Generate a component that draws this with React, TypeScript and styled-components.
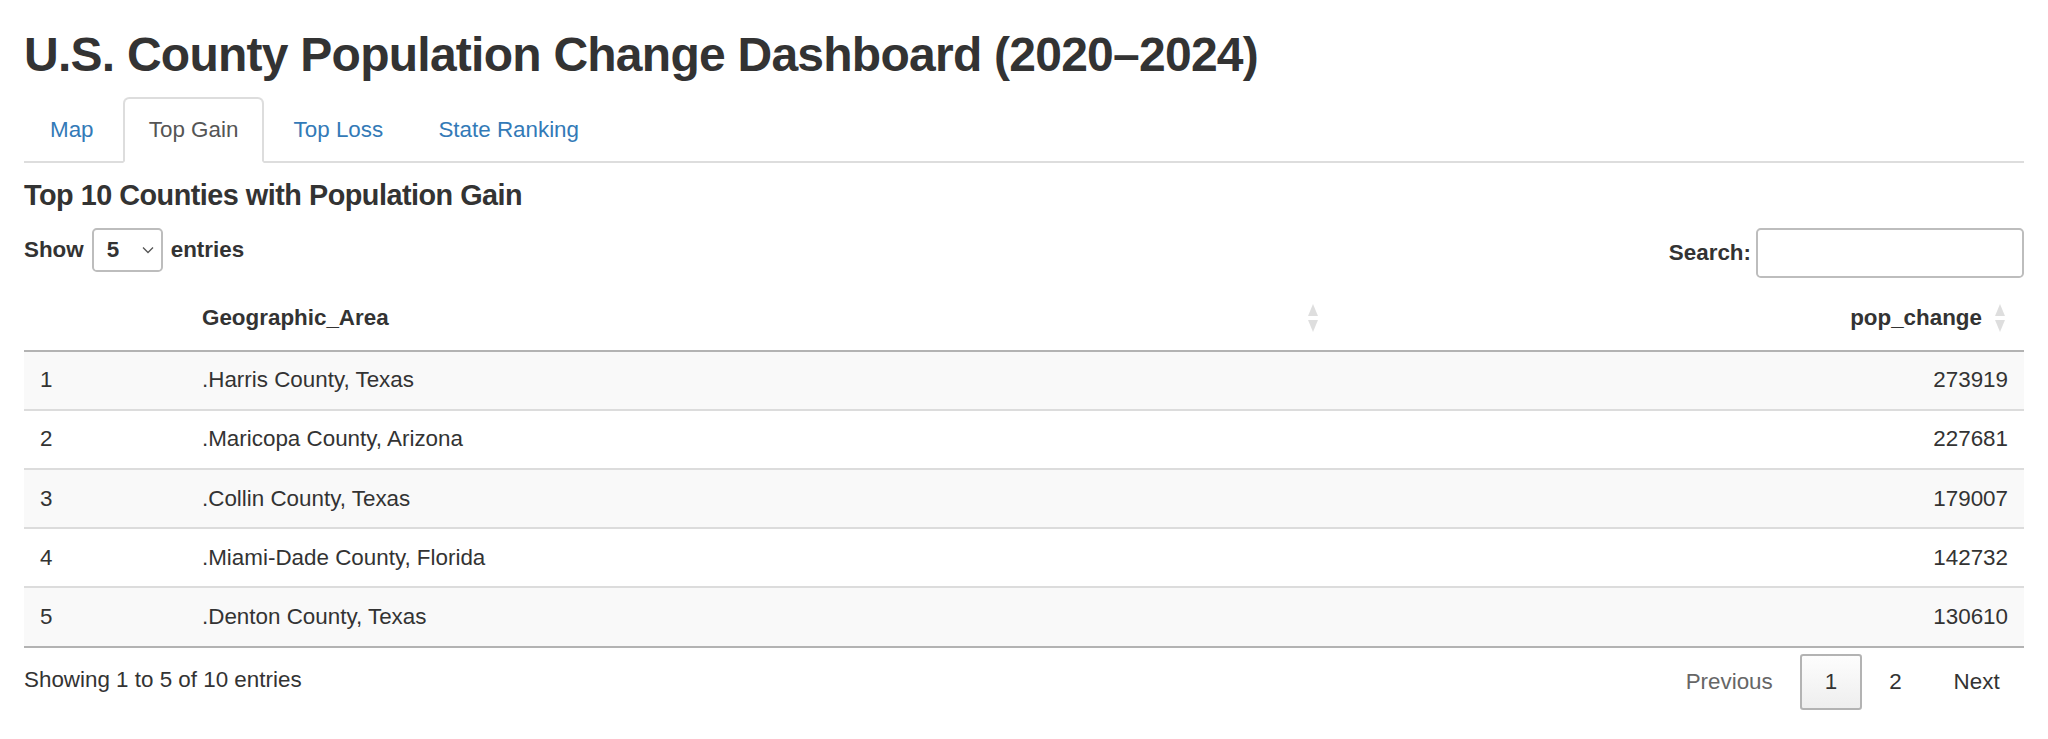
import * as React from "react";
import styled, { createGlobalStyle } from "styled-components";

const GlobalStyle = createGlobalStyle`
  html, body {
    margin: 0;
    padding: 0;
    background: #fff;
  }
  body {
    font-family: "Liberation Sans", Arial, Helvetica, sans-serif;
    font-size: 22.4px;
    line-height: 32px;
    color: #333;
  }
  * {
    box-sizing: border-box;
  }
`;

const Page = styled.div`
  padding: 0 24px;
`;

const Title = styled.h2`
  margin: 29px 0 15px;
  font-size: 48px;
  line-height: 52.8px;
  font-weight: 700;
  letter-spacing: -0.75px;
`;

const Tabs = styled.ul`
  display: flex;
  margin: 0;
  padding: 0;
  list-style: none;
  border-bottom: 2px solid #ddd;
`;

const TabItem = styled.li`
  margin: 0 3.2px -2px 0;
`;

const TabLink = styled.a<{ $active?: boolean }>`
  display: block;
  padding: 15px 24px;
  line-height: 32px;
  border: 2px solid ${(p) => (p.$active ? "#ddd" : "transparent")};
  border-bottom-color: transparent;
  border-radius: 6.4px 6.4px 0 0;
  background: ${(p) => (p.$active ? "#fff" : "transparent")};
  color: ${(p) => (p.$active ? "#555" : "#337ab7")};
  text-decoration: none;
  cursor: pointer;
`;

const SectionTitle = styled.h4`
  margin: 17px 0 16px;
  font-size: 28.8px;
  line-height: 31.7px;
  font-weight: 700;
  letter-spacing: -0.5px;
`;

const Controls = styled.div`
  display: flex;
  justify-content: space-between;
  align-items: flex-start;
`;

const ControlLabel = styled.label<{ $gap: number }>`
  display: flex;
  align-items: center;
  gap: ${(p) => p.$gap}px;
  font-weight: 700;
`;

const SelectBox = styled.div`
  display: flex;
  align-items: center;
  justify-content: space-between;
  width: 71px;
  height: 44.4px;
  padding: 0 7px 0 13px;
  border: 2px solid #bdbdbd;
  border-radius: 4.8px;
  background: #fff;
`;

const SearchInput = styled.input`
  width: 268px;
  height: 50.4px;
  padding: 8px;
  border: 2px solid #bdbdbd;
  border-radius: 4.8px;
  font: inherit;
  color: #333;
  background: #fff;
`;

const Table = styled.table`
  width: 100%;
  margin-top: 7.7px;
  border-collapse: collapse;
  table-layout: fixed;
  border-bottom: 2px solid #b3b3b3;
`;

const HeadCell = styled.th`
  padding: 16px 19px 16px 16px;
  border-bottom: 2px solid #b3b3b3;
  font-weight: 700;
  text-align: left;
`;

const HeadInner = styled.div<{ $right?: boolean }>`
  display: flex;
  align-items: center;
  justify-content: ${(p) => (p.$right ? "flex-end" : "space-between")};
  gap: 13px;
`;

const Row = styled.tr<{ $odd: boolean }>`
  background: ${(p) => (p.$odd ? "#f9f9f9" : "#fff")};
`;

const Cell = styled.td<{ $right?: boolean; $first?: boolean }>`
  padding: 12.6px 16px;
  border-top: ${(p) => (p.$first ? "none" : "2px solid #dcdcdc")};
  text-align: ${(p) => (p.$right ? "right" : "left")};
`;

const Footer = styled.div`
  display: flex;
  justify-content: space-between;
  align-items: flex-start;
`;

const Info = styled.div`
  padding-top: 16.9px;
`;

const Pager = styled.div`
  display: flex;
  padding-top: 6px;
`;

const PageButton = styled.a<{ $current?: boolean; $disabled?: boolean }>`
  margin-left: 3.2px;
  padding: 10px 22.4px;
  line-height: 32px;
  border: 2px solid ${(p) => (p.$current ? "#b3b3b3" : "transparent")};
  border-radius: 3.2px;
  background: ${(p) =>
    p.$current ? "linear-gradient(to bottom, #fdfdfd 0%, #eeeeee 100%)" : "none"};
  color: ${(p) => (p.$disabled ? "#666" : "#333")};
  cursor: ${(p) => (p.$disabled ? "default" : "pointer")};
`;

const SortIcon = () => (
  <svg width="10" height="28" viewBox="0 0 10 28">
    <path d="M5 0 L10 12 L0 12 Z" fill="#000" fillOpacity="0.13" />
    <path d="M0 16 L10 16 L5 28 Z" fill="#000" fillOpacity="0.13" />
  </svg>
);

const Chevron = () => (
  <svg width="12" height="8" viewBox="0 0 12 8">
    <polyline points="1,1.5 6,6.5 11,1.5" fill="none" stroke="#555" strokeWidth="1.3" />
  </svg>
);

const rows = [
  { id: 1, area: ".Harris County, Texas", change: 273919 },
  { id: 2, area: ".Maricopa County, Arizona", change: 227681 },
  { id: 3, area: ".Collin County, Texas", change: 179007 },
  { id: 4, area: ".Miami-Dade County, Florida", change: 142732 },
  { id: 5, area: ".Denton County, Texas", change: 130610 },
];

const tabs = ["Map", "Top Gain", "Top Loss", "State Ranking"];

const App: React.FC = () => {
  return (
    <React.Fragment>
      <GlobalStyle />
      <Page>
        <Title>U.S. County Population Change Dashboard (2020–2024)</Title>
        <Tabs>
          {tabs.map((t) => (
            <TabItem key={t}>
              <TabLink $active={t === "Top Gain"}>{t}</TabLink>
            </TabItem>
          ))}
        </Tabs>

        <SectionTitle>Top 10 Counties with Population Gain</SectionTitle>

        <Controls>
          <ControlLabel $gap={8}>
            Show
            <SelectBox>
              <span>5</span>
              <Chevron />
            </SelectBox>
            entries
          </ControlLabel>
          <ControlLabel $gap={5}>
            Search:
            <SearchInput type="search" />
          </ControlLabel>
        </Controls>

        <Table>
          <colgroup>
            <col style={{ width: "162px" }} />
            <col style={{ width: "1151px" }} />
            <col />
          </colgroup>
          <thead>
            <tr>
              <HeadCell />
              <HeadCell>
                <HeadInner>
                  <span>Geographic_Area</span>
                  <SortIcon />
                </HeadInner>
              </HeadCell>
              <HeadCell>
                <HeadInner $right>
                  <span>pop_change</span>
                  <SortIcon />
                </HeadInner>
              </HeadCell>
            </tr>
          </thead>
          <tbody>
            {rows.map((r, i) => (
              <Row key={r.id} $odd={i % 2 === 0}>
                <Cell $first={i === 0}>{r.id}</Cell>
                <Cell $first={i === 0}>{r.area}</Cell>
                <Cell $first={i === 0} $right>
                  {r.change}
                </Cell>
              </Row>
            ))}
          </tbody>
        </Table>

        <Footer>
          <Info>Showing 1 to 5 of 10 entries</Info>
          <Pager>
            <PageButton $disabled>Previous</PageButton>
            <PageButton $current>1</PageButton>
            <PageButton>2</PageButton>
            <PageButton>Next</PageButton>
          </Pager>
        </Footer>
      </Page>
    </React.Fragment>
  );
};

export default App;
